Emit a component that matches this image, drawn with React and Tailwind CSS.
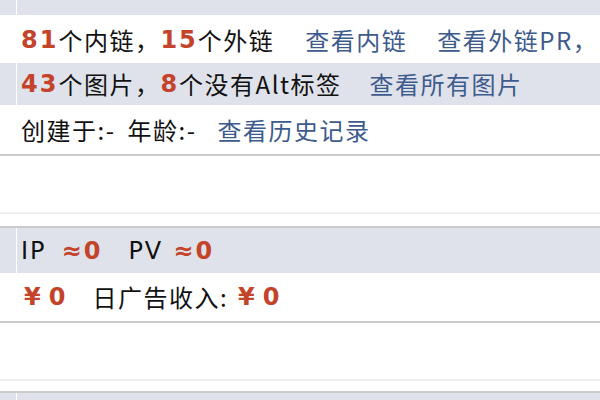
const cjk = "font-['Noto_Sans_CJK_SC','Noto_Sans',sans-serif]"
const num = "font-['DejaVu_Sans',sans-serif] font-bold text-[#c4432b] tracking-[2px]"
const link = "text-[#3d5b8c]"
const latin = "font-['DejaVu_Sans',sans-serif] tracking-[2px]"

const Row = ({ gray, h, children }) => (
  <div className={`flex ${h} ${gray ? "bg-[#dfe2ea]" : "bg-white"}`}>
    <div className={`w-[17px] shrink-0 ${gray ? "border-r border-white" : ""}`} />
    <div className="flex items-center pl-[4px] whitespace-nowrap overflow-hidden">{children}</div>
  </div>
)

const App = () => {
  return (
    <div className={`w-[600px] h-[400px] overflow-hidden bg-white text-[24px] leading-none tracking-[1.5px] text-[#111] ${cjk}`}>
      <div className="border-b-2 border-[#cbcbcb]">
        <Row gray h="h-[15px]" />
        <div className="h-px bg-white" />
        <Row h="h-[47px]">
          <span className={num}>81</span>个内链，<span className={num}>15</span>个外链
          <span className={`${link} ml-[31px]`}>查看内链</span>
          <span className={`${link} ml-[30px]`}>查看外链PR，1</span>
        </Row>
        <Row gray h="h-[42px]">
          <span className={num}>43</span>个图片，<span className={num}>8</span>个没有Alt标签
          <span className={`${link} ml-[28px]`}>查看所有图片</span>
        </Row>
        <Row h="h-[49px]">
          创建于:-<span className="ml-[12px]">年龄:-</span>
          <span className={`${link} ml-[21px]`}>查看历史记录</span>
        </Row>
      </div>

      <div className="h-[56px]" />
      <div className="h-[2px] bg-[#eeeeee]" />
      <div className="h-[12px]" />

      <div className="border-t-2 border-b-2 border-[#cbcbcb]">
        <Row gray h="h-[45px]">
          <span className={latin}>IP</span>
          <span className={`${num} ml-[15px]`}>≈0</span>
          <span className={`${latin} ml-[26px]`}>PV</span>
          <span className={`${num} ml-[10px]`}>≈0</span>
        </Row>
        <Row h="h-[48px]">
          <span className={`${num} ml-[3px] tracking-[8px]`}>¥0</span>
          <span className="ml-[19px]">日广告收入:</span>
          <span className={`${num} ml-[10px] tracking-[8px]`}>¥0</span>
        </Row>
      </div>

      <div className="h-[56px]" />
      <div className="h-[2px] bg-[#eeeeee]" />
      <div className="h-[10px]" />
      <div className="border-t-2 border-[#cbcbcb]">
        <Row gray h="h-[20px]" />
      </div>
    </div>
  )
}

export default App
